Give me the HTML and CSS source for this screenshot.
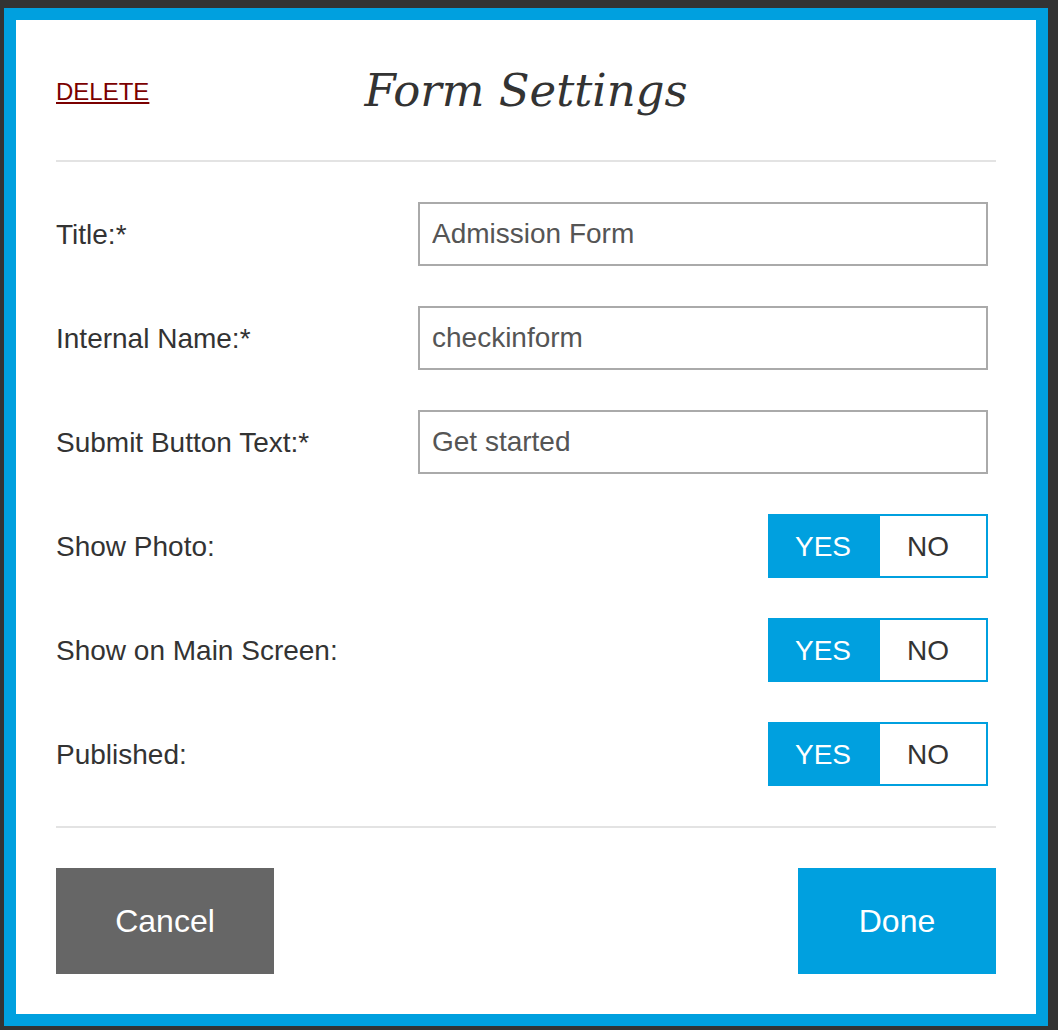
FILE: index.html
```html
<!DOCTYPE html>
<html lang="en">
<head>
<meta charset="utf-8">
<title>Form Settings</title>
<link rel="stylesheet" href="styles.css">
</head>
<body>
<div class="modal">
  <div class="header">
    <a class="delete" href="#">DELETE</a>
    <h1 class="title">Form Settings</h1>
    <span></span>
  </div>
  <div class="rule"></div>
  <div class="rows">
    <div class="row">
      <label class="label">Title:*</label>
      <input class="field" type="text" value="Admission Form">
    </div>
    <div class="row">
      <label class="label">Internal Name:*</label>
      <input class="field" type="text" value="checkinform">
    </div>
    <div class="row">
      <label class="label">Submit Button Text:*</label>
      <input class="field" type="text" value="Get started">
    </div>
    <div class="row">
      <span class="label">Show Photo:</span>
      <div class="toggle"><span class="opt yes">YES</span><span class="opt no">NO</span></div>
    </div>
    <div class="row">
      <span class="label">Show on Main Screen:</span>
      <div class="toggle"><span class="opt yes">YES</span><span class="opt no">NO</span></div>
    </div>
    <div class="row">
      <span class="label">Published:</span>
      <div class="toggle"><span class="opt yes">YES</span><span class="opt no">NO</span></div>
    </div>
  </div>
  <div class="rule"></div>
  <div class="footer">
    <button class="btn cancel">Cancel</button>
    <button class="btn done">Done</button>
  </div>
</div>
</body>
</html>
```
FILE: styles.css
```css
html, body {
  margin: 0;
  padding: 0;
  background: #333333;
}
body {
  padding: 8px 10px 4px 4px;
  font-family: "Liberation Sans", Arial, sans-serif;
  color: #333333;
}
.modal {
  width: 940px;
  background: #ffffff;
  border: 12px solid #00a0df;
  padding: 40px;
}
.header {
  height: 60px;
  display: grid;
  grid-template-columns: 1fr auto 1fr;
  align-items: center;
}
.delete {
  justify-self: start;
  font-size: 24px;
  color: #7b0000;
  text-decoration: underline;
  text-underline-offset: 2px;
  margin-top: 3px;
}
.title {
  margin: 0;
  font-family: "DejaVu Serif", Georgia, serif;
  font-style: italic;
  font-weight: normal;
  font-size: 45px;
  color: #333333;
  line-height: 1;
  margin-top: 0;
}
.rule {
  height: 2px;
  background: #e3e3e3;
  margin: 40px 0;
}
.rows {
  display: flex;
  flex-direction: column;
  gap: 40px;
}
.row {
  display: flex;
  align-items: center;
  height: 64px;
}
.label {
  width: 362px;
  font-size: 28px;
  color: #333333;
  margin-top: 2px;
}
.field {
  width: 570px;
  height: 64px;
  box-sizing: border-box;
  border: 2px solid #aaaaaa;
  border-radius: 0;
  padding: 0 12px;
  font-family: "Liberation Sans", Arial, sans-serif;
  font-size: 28px;
  color: #555555;
  background: #ffffff;
  outline: none;
  margin: 0;
}
.toggle {
  margin-left: auto;
  margin-right: 8px;
  display: flex;
  height: 64px;
  box-sizing: border-box;
  border: 2px solid #00a0df;
}
.opt {
  display: flex;
  align-items: center;
  justify-content: center;
  font-size: 28px;
  padding-top: 2px;
  box-sizing: border-box;
}
.yes {
  width: 110px;
  padding-right: 4px;
  background: #00a0df;
  color: #ffffff;
}
.no {
  width: 106px;
  padding-right: 10px;
  color: #333333;
}
.footer {
  display: flex;
  justify-content: space-between;
}
.btn {
  height: 106px;
  border: none;
  border-radius: 0;
  font-family: "Liberation Sans", Arial, sans-serif;
  font-size: 32px;
  color: #ffffff;
  padding: 0;
  cursor: pointer;
}
.cancel {
  width: 218px;
  background: #666666;
}
.done {
  width: 198px;
  background: #00a0df;
}
```
